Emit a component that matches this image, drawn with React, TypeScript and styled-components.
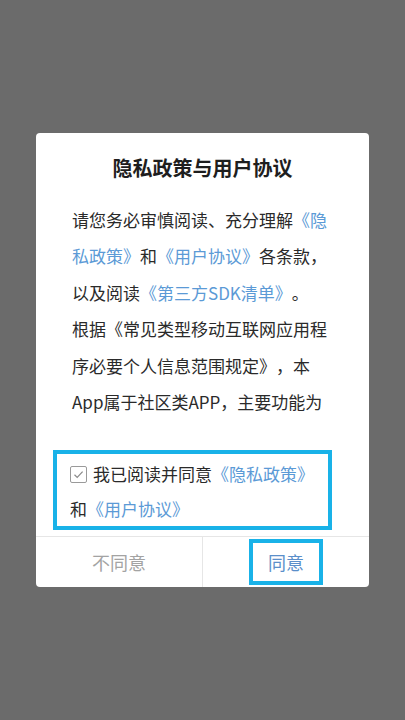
import React, { FC } from 'react'
import styled, { createGlobalStyle } from 'styled-components'

const GlobalStyle = createGlobalStyle`
  html, body {
    margin: 0;
    padding: 0;
    background: #6b6b6b;
  }
  body {
    font-family: "Noto Sans CJK SC", "Noto Sans", sans-serif;
    text-spacing-trim: space-all;
  }
`

const Screen = styled.div`
  width: 405px;
  height: 720px;
  display: flex;
  align-items: center;
  justify-content: center;
  background: #6b6b6b;
`

const Dialog = styled.div`
  width: 333px;
  height: 454px;
  display: flex;
  flex-direction: column;
  background: #fff;
  border-radius: 4px;
  overflow: hidden;
`

const Title = styled.h1`
  margin: 21px 0 0;
  font-size: 20px;
  line-height: 28px;
  font-weight: 700;
  color: #1e1e1e;
  text-align: center;
`

const Body = styled.div`
  margin-top: 20px;
  padding: 0 36px;
  height: 220px;
  overflow: hidden;
  font-size: 17px;
  line-height: 36.4px;
  color: #2a2a2a;
`

const Para = styled.p`
  margin: 0;
`

const Link = styled.span`
  color: #5b9ad6;
`

const Agreement = styled.div`
  margin: 28px 37px 0 17px;
  padding: 2px 8px 0 13px;
  border: 4px solid #19b2e8;
  font-size: 17px;
  line-height: 35px;
  color: #2a2a2a;
`

const Check = styled.span`
  display: inline-block;
  width: 15px;
  height: 15px;
  margin-right: 6px;
  vertical-align: -2px;
  border: 1px solid #9a9a9a;
  border-radius: 2px;
  position: relative;

  svg {
    position: absolute;
    left: 1px;
    top: 1px;
  }
`

const Footer = styled.div`
  margin-top: auto;
  display: flex;
  height: 50px;
  border-top: 1px solid #e6e6e6;
`

const Button = styled.div<{ $primary?: boolean }>`
  flex: 1;
  display: flex;
  align-items: center;
  justify-content: center;
  font-size: 18px;
  color: ${({ $primary }) => ($primary ? '#5b8fca' : '#a3a3a3')};

  & + & {
    border-left: 1px solid #e6e6e6;
  }
`

const Highlight = styled.span`
  display: inline-block;
  padding: 0 15px;
  line-height: 38px;
  border: 4px solid #19b2e8;
`

const CheckBox: FC = () => (
  <Check>
    <svg width="13" height="13" viewBox="0 0 13 13">
      <path d="M2.5 6.8 L5.2 9.4 L10.6 3.6" fill="none" stroke="#8a8a8a" strokeWidth="1.2" />
    </svg>
  </Check>
)

const App: FC = () => (
  <>
    <GlobalStyle />
    <Screen>
      <Dialog>
        <Title>隐私政策与用户协议</Title>
        <Body>
          <Para>
            请您务必审慎阅读、充分理解<Link>《隐私政策》</Link>和<Link>《用户协议》</Link>各条款，以及阅读
            <Link>《第三方SDK清单》</Link>。
          </Para>
          <Para>
            根据《常见类型移动互联网应用程序必要个人信息范围规定》，本App属于社区类APP，主要功能为用户提供内容浏览、发布与互动交流服务。
          </Para>
        </Body>
        <Agreement>
          <CheckBox />
          我已阅读并同意<Link>《隐私政策》</Link>和<Link>《用户协议》</Link>
        </Agreement>
        <Footer>
          <Button>不同意</Button>
          <Button $primary>
            <Highlight>同意</Highlight>
          </Button>
        </Footer>
      </Dialog>
    </Screen>
  </>
)

export default App
